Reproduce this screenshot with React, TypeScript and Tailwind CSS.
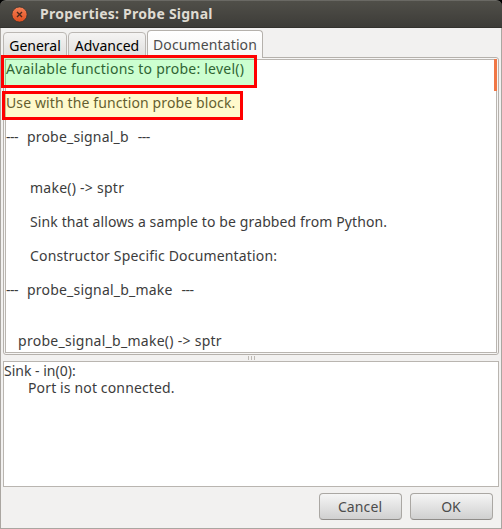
import React from "react";

type Line = { text: string; className: string; ruled?: boolean };

const docLines: Line[] = [
  { text: "Available functions to probe: level()", className: "tracking-[0.23px]" },
  { text: "", className: "" },
  { text: "Use with the function probe block.", className: "tracking-[0.12px]" },
  { text: "", className: "" },
  { text: "probe_signal_b", className: "tracking-[0.18px]", ruled: true },
  { text: "", className: "" },
  { text: "", className: "" },
  { text: "make() -> sptr", className: "pl-6 tracking-[0.25px]" },
  { text: "", className: "" },
  { text: "Sink that allows a sample to be grabbed from Python.", className: "pl-6 tracking-[0.115px]" },
  { text: "", className: "" },
  { text: "Constructor Specific Documentation:", className: "pl-6 tracking-[0.17px]" },
  { text: "", className: "" },
  { text: "probe_signal_b_make", className: "tracking-[0.2px]", ruled: true },
  { text: "", className: "" },
  { text: "", className: "" },
  { text: "probe_signal_b_make() -> sptr", className: "pl-3 tracking-[0.27px]" },
];

function DocLine({ line }: { line: Line }) {
  if (line.ruled) {
    return (
      <div className="flex h-[17px]">
        <span className="w-[21px] tracking-[-0.5px]">---</span>
        <span className={line.className}>{line.text}</span>
        <span className="ml-[9px] tracking-[-0.5px]">---</span>
      </div>
    );
  }
  return <div className={"h-[17px] " + line.className}>{line.text}</div>;
}

function TitleBar() {
  return (
    <header className="flex h-7 shrink-0 items-center rounded-t-[6px] border-t border-b border-t-[#6a6964] border-b-[#33322e] bg-linear-to-b from-[#504f49] to-[#3d3c38] pl-[11px]">
      <svg width="17" height="17" viewBox="0 0 17 17" className="shrink-0">
        <defs>
          <linearGradient id="close" x1="0" y1="0" x2="0" y2="1">
            <stop offset="0" stopColor="#f58055" />
            <stop offset="1" stopColor="#e04e1f" />
          </linearGradient>
        </defs>
        <circle cx="8.5" cy="8.5" r="7.6" fill="url(#close)" stroke="#35332f" strokeWidth="0.8" />
        <path d="M6 6l5 5M11 6l-5 5" stroke="#4b291c" strokeWidth="1.4" />
      </svg>
      <span className="ml-3 text-[14px] leading-4 font-bold tracking-[0.25px] text-[#dfdbd2]">Properties: Probe Signal</span>
    </header>
  );
}

function Tabs() {
  return (
    <nav className="relative z-10 -mb-px flex h-7 items-end gap-px text-[14px] leading-[17px]">
      <button className="h-[26px] w-16 rounded-t-[4px] border border-[#bbb7b3] bg-linear-to-b from-[#f5f4f3] to-[#dfdedd] whitespace-nowrap text-black">General</button>
      <button className="h-[26px] w-[78px] rounded-t-[4px] border border-[#bbb7b3] bg-linear-to-b from-[#f5f4f3] to-[#dfdedd] whitespace-nowrap text-black">Advanced</button>
      <button className="h-7 w-[116px] rounded-t-[4px] border border-b-0 border-[#b5b1ac] bg-linear-to-b from-white to-[#f6f5f4] tracking-[0.12px] whitespace-nowrap text-[#4c4c4c]">Documentation</button>
    </nav>
  );
}

export default function App() {
  return (
    <div className="relative h-[529px] w-[502px] overflow-hidden bg-black font-['Noto_Sans','Open_Sans',sans-serif] text-[#3c3c3c]">
      <div className="flex h-full flex-col">
        <TitleBar />
        <main className="flex flex-1 flex-col border-x border-b border-[#aaa6a1] bg-[#f2f1f0] px-[2px] pt-[2px]">
          <Tabs />
          <section className="h-[298px] rounded-b-[3px] rounded-tr-[3px] border border-[#b5b1ac] bg-[#f7f6f5] p-px">
            <div className="flex h-full border border-[#b9b5b0] bg-white">
              <div className="flex-1 text-[14px] leading-[17px] whitespace-pre">
                {docLines.map((line, i) => (
                  <DocLine key={i} line={line} />
                ))}
              </div>
              <div className="relative -mt-px -mr-px h-8 w-[3px] bg-[#f07746]" />
            </div>
          </section>
          <div className="flex h-[6px] items-center justify-center gap-[2px] pl-px">
            <i className="h-1 w-px bg-[#bebab5]" />
            <i className="h-1 w-px bg-[#bebab5]" />
            <i className="h-1 w-px bg-[#bebab5]" />
          </div>
          <section className="h-[126px] border border-[#b9b5b0] bg-white text-[14px] leading-[17px]">
            <div>Sink - in(0):</div>
            <div className="pl-6 tracking-[0.14px]">Port is not connected.</div>
          </section>
          <footer className="mt-[6px] mr-[6px] flex justify-end gap-2 text-[14px] leading-[17px] text-[#4c4c4c]">
            <button className="h-[27px] w-[83px] rounded-[4px] border border-[#aaa7a3] border-b-[#8f8c89] bg-linear-to-b from-[#f5f5f5] to-[#d0d0d0] pr-px tracking-[0.1px]">Cancel</button>
            <button className="h-[27px] w-[83px] rounded-[4px] border border-[#aaa7a3] border-b-[#8f8c89] bg-linear-to-b from-[#f5f5f5] to-[#d0d0d0] pr-px">OK</button>
          </footer>
        </main>
      </div>
      <div className="absolute top-[55px] left-px z-20 h-[33px] w-64 border-3 border-[#ff0000] bg-[rgba(0,255,20,0.2)]" />
      <div className="absolute top-[91px] left-[2px] z-20 h-[29px] w-[241px] border-3 border-[#ff0000] bg-[rgba(255,230,0,0.2)]" />
    </div>
  );
}
